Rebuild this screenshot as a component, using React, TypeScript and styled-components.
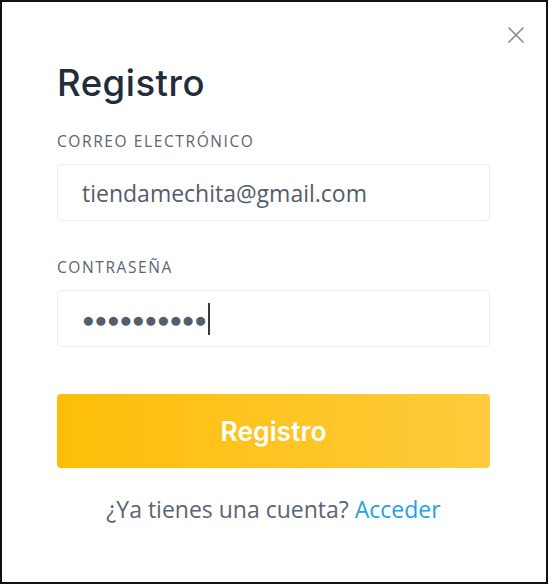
import React from "react";
import styled, { createGlobalStyle } from "styled-components";

const Global = createGlobalStyle`
  html, body { margin: 0; padding: 0; background: #ffffff; }
  * { box-sizing: border-box; }
`;

const Frame = styled.div`
  width: 548px;
  height: 584px;
  border: 2px solid #111111;
  background: #ffffff;
  position: relative;
  padding: 61px 56px 0 55px;
  display: flex;
  flex-direction: column;
`;

const CloseButton = styled.button`
  position: absolute;
  top: 23px;
  right: 20px;
  width: 20px;
  height: 20px;
  padding: 0;
  border: none;
  background: transparent;
  display: flex;
  align-items: center;
  justify-content: center;
`;

const Title = styled.h1`
  margin: 0;
  font-family: "Inter", "Noto Sans", sans-serif;
  font-weight: 500;
  font-size: 36.5px;
  line-height: 40px;
  color: #232c3a;
  letter-spacing: 0.5px;
`;

const Field = styled.div<{ $top: number }>`
  display: flex;
  flex-direction: column;
  margin-top: ${(p) => p.$top}px;
`;

const Label = styled.label`
  font-family: "Open Sans", sans-serif;
  font-size: 15.5px;
  line-height: 20px;
  letter-spacing: 1.6px;
  color: #5d6470;
`;

const InputBox = styled.div`
  margin-top: 13px;
  height: 57px;
  border: 1px solid #eceef2;
  border-radius: 4px;
  display: flex;
  align-items: center;
  padding-left: 24px;
  font-family: "Open Sans", sans-serif;
  font-size: 23px;
  line-height: 30px;
  color: #545d6b;
`;

const Dots = styled.span`
  font-size: 21px;
  letter-spacing: -0.2px;
  color: #545d6b;
`;

const Caret = styled.span`
  display: inline-block;
  width: 2px;
  height: 32px;
  background: #333a44;
  margin-left: 1px;
`;

const SubmitButton = styled.button`
  margin-top: 47px;
  height: 74px;
  border: none;
  border-radius: 4px;
  background: linear-gradient(90deg, #fdbe08 0%, #fecb3c 100%);
  color: #ffffff;
  font-family: "Inter", "Noto Sans", sans-serif;
  font-weight: 600;
  font-size: 26.5px;
`;

const Footer = styled.p`
  margin: 26px 0 0;
  text-align: center;
  font-family: "Open Sans", sans-serif;
  font-size: 23px;
  line-height: 30px;
  color: #5b6573;
`;

const Link = styled.a`
  color: #1fa2e6;
  text-decoration: none;
`;

export default function App() {
  return (
    <>
      <Global />
      <Frame>
        <CloseButton aria-label="Cerrar">
          <svg width="18" height="18" viewBox="0 0 18 18">
            <path d="M2 2 L16 16 M16 2 L2 16" stroke="#8a8d93" strokeWidth="1.7" strokeLinecap="round" />
          </svg>
        </CloseButton>
        <Title>Registro</Title>
        <Field $top={28}>
          <Label>CORREO ELECTRÓNICO</Label>
          <InputBox>tiendamechita@gmail.com</InputBox>
        </Field>
        <Field $top={36}>
          <Label>CONTRASEÑA</Label>
          <InputBox>
            <Dots>●●●●●●●●●●</Dots>
            <Caret />
          </InputBox>
        </Field>
        <SubmitButton>Registro</SubmitButton>
        <Footer>
          ¿Ya tienes una cuenta? <Link href="#">Acceder</Link>
        </Footer>
      </Frame>
    </>
  );
}
